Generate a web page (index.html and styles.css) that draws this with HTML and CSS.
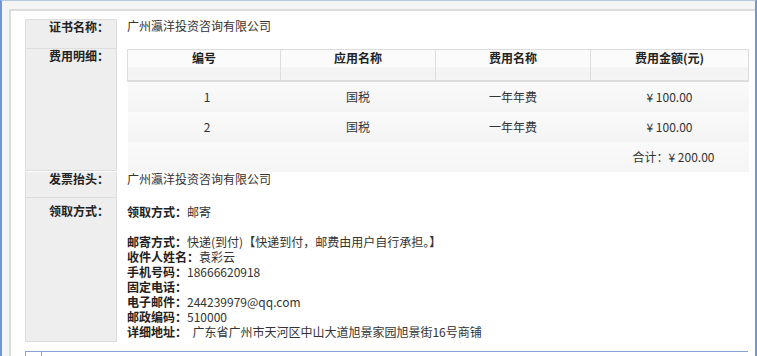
FILE: index.html
```html
<!DOCTYPE html>
<html lang="zh">
<head>
<meta charset="utf-8">
<link rel="stylesheet" href="styles.css">
</head>
<body>
<div class="frame">
  <div class="panel">
    <div class="row r1">
      <div class="lbl">证书名称：</div>
      <div class="val">广州瀛洋投资咨询有限公司</div>
    </div>
    <div class="row r2">
      <div class="lbl">费用明细：</div>
      <div class="val">
        <table class="fees">
          <colgroup><col class="c1"><col class="c2"><col class="c3"><col class="c4"></colgroup>
          <thead>
            <tr><th>编号</th><th>应用名称</th><th>费用名称</th><th>费用金额(元)</th></tr>
          </thead>
          <tbody>
            <tr><td>1</td><td>国税</td><td>一年年费</td><td>¥ 100.00</td></tr>
            <tr><td>2</td><td>国税</td><td>一年年费</td><td>¥ 100.00</td></tr>
            <tr class="total"><td></td><td></td><td></td><td>合计：¥ 200.00</td></tr>
          </tbody>
        </table>
      </div>
    </div>
    <div class="row r3">
      <div class="lbl">发票抬头：</div>
      <div class="val">广州瀛洋投资咨询有限公司</div>
    </div>
    <div class="row r4">
      <div class="lbl">领取方式：</div>
      <div class="val">
        <p class="line"><b>领取方式：</b>邮寄</p>
        <p class="line gap"><b>邮寄方式：</b>快递(到付)【快递到付，邮费由用户自行承担。】</p>
        <p class="line"><b>收件人姓名：</b>袁彩云</p>
        <p class="line"><b>手机号码：</b>18666620918</p>
        <p class="line"><b>固定电话：</b></p>
        <p class="line"><b>电子邮件：</b>244239979@qq.com</p>
        <p class="line"><b>邮政编码：</b>510000</p>
        <p class="line"><b>详细地址：</b>&nbsp;&nbsp;广东省广州市天河区中山大道旭景家园旭景街16号商铺</p>
      </div>
    </div>
    <div class="next"><span class="tick"></span></div>
  </div>
</div>
</body>
</html>
```

FILE: styles.css
```css
html, body {
  margin: 0;
  padding: 0;
  background: #fff;
}
body {
  font-family: "Noto Sans CJK SC", "Liberation Sans", sans-serif;
  font-size: 12px;
  color: #333;
}
.frame {
  box-sizing: border-box;
  width: 757px;
  height: 356px;
  overflow: hidden;
  border-left: 2px solid #7196d2;
  border-right: 2px solid #7196d2;
  border-top: 1px solid #b8c8e2;
  background: #f5f5f5;
  padding: 8px 0 0 7px;
}
.panel {
  box-sizing: border-box;
  height: 400px;
  border-left: 2px solid #dcdcdc;
  border-top: 2px solid #dcdcdc;
  background: #fff;
  padding: 8px 5px 0 14px;
}
.row {
  display: flex;
}
.lbl {
  box-sizing: border-box;
  flex: 0 0 92px;
  background: #eeeeee;
  border-left: 1px solid #dddddd;
  border-right: 1px solid #dddddd;
  border-bottom: 1px solid #dddddd;
  text-align: right;
  padding-right: 7px;
  font-weight: bold;
  color: #222;
  line-height: 14px;
}
.r1 .lbl {
  border-top: 1px solid #dddddd;
  height: 30px;
}
.r2 .lbl { height: 122px; padding-top: 0; }
.r3 .lbl { height: 26px; }
.r4 .lbl { height: 144px; padding-top: 6px; }
.val {
  flex: 1;
  margin-left: 10px;
  line-height: 14px;
}
.fees {
  width: 621px;
  border-collapse: collapse;
  table-layout: fixed;
}
.c1 { width: 153px; }
.c2 { width: 155px; }
.c3 { width: 155px; }
.c4 { width: 158px; }
.fees th {
  height: 29px;
  vertical-align: top;
  padding: 1px 0 0;
  font-weight: bold;
  color: #222;
  border: 1px solid #dddddd;
  border-bottom: 2px solid #dddddd;
  background: linear-gradient(#fbfbfb 0, #fbfbfb 17px, #f3f3f3 17px, #f5f5f5 100%);
}
.fees td {
  height: 30px;
  padding: 0;
  text-align: center;
  vertical-align: middle;
  background: linear-gradient(#fafafa, #f4f4f4);
}
.fees tr.total td {
  background: linear-gradient(#fafafa, #f5f5f5);
}
.fees td:first-child { padding-left: 6px; }
.fees tr.total td:last-child { padding-left: 8px; }
.line {
  margin: 0;
  line-height: 15px;
}
.r4 .val { padding-top: 6px; }
.line.gap { margin-top: 15px; }
.line b { color: #222; }
.next {
  position: relative;
  margin-top: 9px;
  width: 722px;
  height: 10px;
  border-top: 1px solid #86a3d4;
  border-left: 1px solid #86a3d4;
}
.tick {
  position: absolute;
  left: 15px;
  top: 0;
  width: 1px;
  height: 10px;
  background: #86a3d4;
}
```
